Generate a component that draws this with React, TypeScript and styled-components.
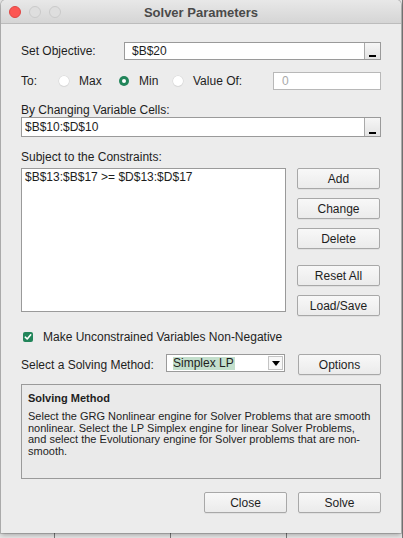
import React from "react";
import styled, { createGlobalStyle } from "styled-components";

const Global = createGlobalStyle`
  html, body { margin: 0; padding: 0; }
  body {
    width: 403px;
    height: 538px;
    overflow: hidden;
    background-color: #e6e6e6;
    background-image: repeating-linear-gradient(90deg, transparent 0 54px, #7a7a7a 54px 55px, transparent 55px 116px);
    font-family: "Liberation Sans", Arial, sans-serif;
  }
`;

const Window = styled.div`
  margin-left: 1px;
  width: 400px;
  height: 533px;
  background: #ececec;
  border-radius: 5px 5px 0 0;
  box-shadow: 0 0 0 1px rgba(0, 0, 0, 0.16), 0 2px 5px rgba(0, 0, 0, 0.28);
  overflow: hidden;
  display: flex;
  flex-direction: column;
  font-family: "Liberation Sans", Arial, sans-serif;
  font-size: 12px;
  color: #1e1e1e;
`;

const TitleBar = styled.div`
  height: 23px;
  flex: none;
  border-bottom: 1px solid #bcbcbc;
  background: linear-gradient(#e8e8e8, #d5d5d5);
  display: grid;
  grid-template-columns: 1fr auto 1fr;
  align-items: center;
`;

const Lights = styled.div`
  display: flex;
  gap: 8px;
  padding-left: 8px;
  padding-top: 1px;
`;

const Light = styled.span<{ $color: string; $border: string }>`
  width: 12px;
  height: 12px;
  box-sizing: border-box;
  border-radius: 50%;
  background: ${(p) => p.$color};
  border: 1px solid ${(p) => p.$border};
`;

const Title = styled.div`
  font-weight: bold;
  font-size: 13px;
  color: #4a4a4a;
  padding-top: 2px;
`;

const Content = styled.div`
  padding: 18px 20px 0 20px;
  display: flex;
  flex-direction: column;
`;

const Row = styled.div<{ $mt?: number; $h: number }>`
  display: flex;
  align-items: center;
  height: ${(p) => p.$h}px;
  margin-top: ${(p) => p.$mt ?? 0}px;
`;

const Label = styled.div<{ $w?: number }>`
  flex: none;
  width: ${(p) => (p.$w ? `${p.$w}px` : "auto")};
  white-space: nowrap;
`;

const BlockLabel = styled.div<{ $mt: number }>`
  margin-top: ${(p) => p.$mt}px;
  line-height: 14px;
  height: 14px;
`;

const Field = styled.div<{ $pl: number; $muted?: boolean; $w?: number }>`
  flex: ${(p) => (p.$w ? "none" : "1")};
  width: ${(p) => (p.$w ? `${p.$w}px` : "auto")};
  height: 100%;
  box-sizing: border-box;
  border: 1px solid ${(p) => (p.$muted ? "#b8b8b8" : "#9a9a9a")};
  background: #fff;
  display: flex;
  align-items: center;
  padding-left: ${(p) => p.$pl}px;
  color: ${(p) => (p.$muted ? "#a9a9a9" : "#1e1e1e")};
`;

const FieldText = styled.span`
  flex: 1;
  white-space: nowrap;
`;

const RefButton = styled.span`
  flex: none;
  width: 16px;
  height: 100%;
  box-sizing: border-box;
  border-left: 1px solid #a9a9a9;
  background: linear-gradient(#f6f6f6, #e3e3e3);
  display: flex;
  align-items: flex-end;
  justify-content: center;
  padding-bottom: 2px;
  &::after {
    content: "";
    width: 7px;
    height: 2px;
    background: #000;
  }
`;

const RadioOption = styled.div<{ $w?: number }>`
  display: flex;
  align-items: center;
  gap: 10px;
  width: ${(p) => (p.$w ? `${p.$w}px` : "auto")};
  flex: ${(p) => (p.$w ? "none" : "1")};
`;

const Radio = styled.span<{ $on?: boolean }>`
  width: 10px;
  height: 10px;
  box-sizing: border-box;
  border-radius: 50%;
  background: ${(p) => (p.$on ? "#22855a" : "#fff")};
  box-shadow: ${(p) => (p.$on ? "none" : "0 0 0 0.5px #d4d4d4, 0 1px 1px rgba(0,0,0,0.08)")};
  display: flex;
  align-items: center;
  justify-content: center;
  &::after {
    content: "";
    width: 4px;
    height: 4px;
    border-radius: 50%;
    background: ${(p) => (p.$on ? "#fff" : "transparent")};
  }
`;

const Main = styled.div`
  display: flex;
  gap: 11px;
  margin-top: 4px;
  align-items: flex-start;
`;

const ListBox = styled.div`
  width: 265px;
  height: 144px;
  box-sizing: border-box;
  border: 1px solid #9a9a9a;
  background: #fff;
  padding: 1px 3px;
  line-height: 14px;
  white-space: nowrap;
`;

const ButtonColumn = styled.div`
  display: flex;
  flex-direction: column;
`;

const Button = styled.div<{ $mt?: number }>`
  width: 83px;
  height: 21px;
  box-sizing: border-box;
  margin-top: ${(p) => p.$mt ?? 0}px;
  border: 1px solid #a8a8a8;
  border-radius: 2px;
  background: linear-gradient(#f8f8f8, #ebebeb);
  box-shadow: 0 1px 0 rgba(0, 0, 0, 0.05);
  display: flex;
  align-items: center;
  justify-content: center;
  color: #1e1e1e;
  white-space: nowrap;
`;

const CheckBox = styled.span`
  width: 10px;
  height: 10px;
  border-radius: 2px;
  background: #22855a;
  margin-left: 2px;
  margin-right: 10px;
  display: flex;
  align-items: center;
  justify-content: center;
`;

const Select = styled.div`
  width: 119px;
  height: 18px;
  box-sizing: border-box;
  border: 1px solid #9a9a9a;
  background: #fff;
  display: flex;
  align-items: center;
  padding-left: 6px;
  align-self: flex-start;
`;

const SelectValue = styled.span`
  background: #c3dfcc;
  line-height: 13px;
  padding-right: 1px;
  white-space: nowrap;
`;

const SelectArrow = styled.span`
  margin-left: auto;
  width: 15px;
  height: 14px;
  margin-right: 1px;
  box-sizing: border-box;
  border: 1px solid #c4c4c4;
  background: #f7f7f7;
  display: flex;
  align-items: center;
  justify-content: center;
  &::after {
    content: "";
    border-left: 4px solid transparent;
    border-right: 4px solid transparent;
    border-top: 5px solid #000;
  }
`;

const Spacer = styled.div`
  flex: 1;
`;

const InfoBox = styled.div`
  margin-top: 9px;
  height: 95px;
  box-sizing: border-box;
  border: 1px solid #9a9a9a;
  background: #eaeaea;
  padding: 6px 6px 0 6px;
`;

const InfoTitle = styled.div`
  font-weight: bold;
  font-size: 11px;
  line-height: 14px;
`;

const InfoText = styled.div`
  margin-top: 6px;
  font-size: 11px;
  line-height: 11.7px;
  white-space: nowrap;
`;

const Footer = styled.div`
  margin-top: 13px;
  display: flex;
  justify-content: flex-end;
  gap: 11px;
`;

export default function App() {
  return (
    <>
      <Global />
      <Window>
        <TitleBar>
          <Lights>
            <Light $color="#fc5753" $border="#df4744" />
            <Light $color="#dedede" $border="#cacaca" />
            <Light $color="#dedede" $border="#cacaca" />
          </Lights>
          <Title>Solver Parameters</Title>
          <div />
        </TitleBar>
        <Content>
          <Row $h={18}>
            <Label $w={103}>Set Objective:</Label>
            <Field $pl={7}>
              <FieldText>$B$20</FieldText>
              <RefButton />
            </Field>
          </Row>
          <Row $h={18} $mt={12}>
            <Label $w={38}>To:</Label>
            <RadioOption $w={60}>
              <Radio />
              Max
            </RadioOption>
            <RadioOption $w={54}>
              <Radio $on />
              Min
            </RadioOption>
            <RadioOption>
              <Radio />
              Value Of:
            </RadioOption>
            <Field $pl={8} $muted $w={108}>
              <FieldText>0</FieldText>
            </Field>
          </Row>
          <BlockLabel $mt={13}>By Changing Variable Cells:</BlockLabel>
          <Row $h={20}>
            <Field $pl={3}>
              <FieldText>$B$10:$D$10</FieldText>
              <RefButton />
            </Field>
          </Row>
          <BlockLabel $mt={13}>Subject to the Constraints:</BlockLabel>
          <Main>
            <ListBox>$B$13:$B$17 &gt;= $D$13:$D$17</ListBox>
            <ButtonColumn>
              <Button>Add</Button>
              <Button $mt={9}>Change</Button>
              <Button $mt={9}>Delete</Button>
              <Button $mt={16}>Reset All</Button>
              <Button $mt={9}>Load/Save</Button>
            </ButtonColumn>
          </Main>
          <Row $h={14} $mt={14}>
            <CheckBox>
              <svg width="8" height="8" viewBox="0 0 8 8">
                <path d="M1.3 4.2 L3.2 6 L6.7 1.8" fill="none" stroke="#fff" strokeWidth="1.6" strokeLinecap="round" strokeLinejoin="round" />
              </svg>
            </CheckBox>
            <Label>Make Unconstrained Variables Non-Negative</Label>
          </Row>
          <Row $h={21} $mt={10}>
            <Label $w={145}>Select a Solving Method:</Label>
            <Select>
              <SelectValue>Simplex LP</SelectValue>
              <SelectArrow />
            </Select>
            <Spacer />
            <Button>Options</Button>
          </Row>
          <InfoBox>
            <InfoTitle>Solving Method</InfoTitle>
            <InfoText>
              Select the GRG Nonlinear engine for Solver Problems that are smooth
              <br />
              nonlinear. Select the LP Simplex engine for linear Solver Problems,
              <br />
              and select the Evolutionary engine for Solver problems that are non-
              <br />
              smooth.
            </InfoText>
          </InfoBox>
          <Footer>
            <Button>Close</Button>
            <Button>Solve</Button>
          </Footer>
        </Content>
      </Window>
    </>
  );
}
